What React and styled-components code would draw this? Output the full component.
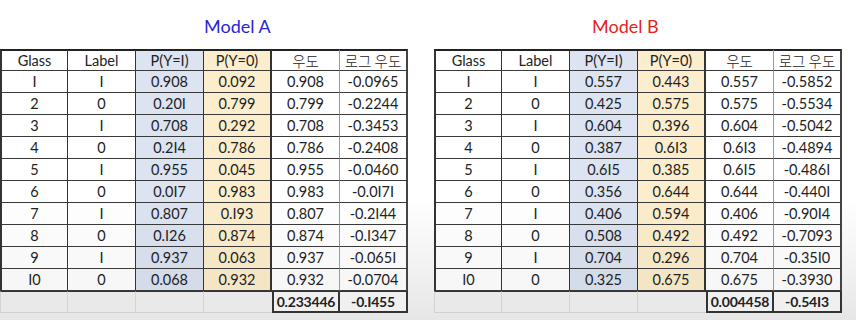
import React from 'react'
import styled, { createGlobalStyle } from 'styled-components';

const GlobalStyle = createGlobalStyle`
    html, body {
        margin: 0;
        padding: 0;
    }
    body {
        width: 856px;
        height: 320px;
        overflow: hidden;
        font-family: "Lato", "Open Sans", sans-serif;
        background: linear-gradient(180deg, #ffffff 0%, #ffffff 62%, #f1f1f1 85%, #e6e6e6 100%);
    }
`;

const models = [
    {
        name: "Model A",
        color: "#2626d4",
        titleOffset: 204,
        rows: [
            ["1", "1", "0.908", "0.092", "0.908", "-0.0965"],
            ["2", "0", "0.201", "0.799", "0.799", "-0.2244"],
            ["3", "1", "0.708", "0.292", "0.708", "-0.3453"],
            ["4", "0", "0.214", "0.786", "0.786", "-0.2408"],
            ["5", "1", "0.955", "0.045", "0.955", "-0.0460"],
            ["6", "0", "0.017", "0.983", "0.983", "-0.0171"],
            ["7", "1", "0.807", "0.193", "0.807", "-0.2144"],
            ["8", "0", "0.126", "0.874", "0.874", "-0.1347"],
            ["9", "1", "0.937", "0.063", "0.937", "-0.0651"],
            ["10", "0", "0.068", "0.932", "0.932", "-0.0704"],
        ],
        total: ["0.233446", "-0.1455"],
    },
    {
        name: "Model B",
        color: "#e5231c",
        titleOffset: 158,
        rows: [
            ["1", "1", "0.557", "0.443", "0.557", "-0.5852"],
            ["2", "0", "0.425", "0.575", "0.575", "-0.5534"],
            ["3", "1", "0.604", "0.396", "0.604", "-0.5042"],
            ["4", "0", "0.387", "0.613", "0.613", "-0.4894"],
            ["5", "1", "0.615", "0.385", "0.615", "-0.4861"],
            ["6", "0", "0.356", "0.644", "0.644", "-0.4401"],
            ["7", "1", "0.406", "0.594", "0.406", "-0.9014"],
            ["8", "0", "0.508", "0.492", "0.492", "-0.7093"],
            ["9", "1", "0.704", "0.296", "0.704", "-0.3510"],
            ["10", "0", "0.325", "0.675", "0.675", "-0.3930"],
        ],
        total: ["0.004458", "-0.5413"],
    },
];

const headers = ["Glass", "Label", "P(Y=1)", "P(Y=0)", "우도", "로그 우도"];
const tones = [null, null, "blue", "yellow", null, null];

// the slide font draws the digit one like a capital I
const fixOne = (s) => s.replace(/1/g, "I");

const App = () => {
    return (
        <>
            <GlobalStyle />
            <StyledPage>
                {models.map((m) => (
                    <StyledPanel key={m.name}>
                        <StyledTitle $color={m.color} $offset={m.titleOffset}>{m.name}</StyledTitle>
                        <StyledGrid>
                            {headers.map((h, c) => (
                                <StyledCell key={h} $tone={tones[c]} $col={c} $head $korean={c >= 4}>{fixOne(h)}</StyledCell>
                            ))}
                            {m.rows.map((r, ri) =>
                                r.map((v, c) => (
                                    <StyledCell key={ri + "-" + c} $tone={tones[c]} $col={c} $fade={ri}>{fixOne(v)}</StyledCell>
                                ))
                            )}
                            <StyledBlank $col={0} />
                            <StyledBlank $col={1} />
                            <StyledBlank $col={2} />
                            <StyledBlank $col={3} />
                            <StyledTotal $col={4}>{fixOne(m.total[0])}</StyledTotal>
                            <StyledTotal $col={5}>{fixOne(m.total[1])}</StyledTotal>
                        </StyledGrid>
                    </StyledPanel>
                ))}
            </StyledPage>
        </>
    )
}

const StyledPage = styled.div`
    display: flex;
    gap: 26px;
    width: 856px;
    height: 320px;
`;

const StyledPanel = styled.div`
    display: flex;
    flex-direction: column;
    width: 408px;
`;

const StyledTitle = styled.div`
    flex-shrink: 0;
    height: 49px;
    box-sizing: border-box;
    padding-top: 12px;
    padding-left: ${(p) => p.$offset}px;
    font-size: 18px;
    line-height: 28px;
    color: ${(p) => p.$color};
`;

const StyledGrid = styled.div`
    flex-shrink: 0;
    display: grid;
    grid-template-columns: repeat(6, 68px);
    grid-auto-rows: 22px;
    font-size: 14.5px;
    color: #222;
`;

const bgFor = (tone, fade) => {
    const k = fade && fade > 5 ? (fade - 5) * 2 : 0;
    if (tone === "blue") return `rgb(${220 - k}, ${227 - k}, ${241 - k})`;
    if (tone === "yellow") return `rgb(${252 - k}, ${238 - k}, ${204 - k})`;
    return `rgb(${255 - k}, ${255 - k}, ${255 - k})`;
};

const rightLine = [
    "1px solid #333",
    "1px solid #333",
    "1px solid #333",
    "2px solid #333",
    "1px solid #9a9a9a",
    "2px solid #444",
];

const StyledCell = styled.div`
    box-sizing: border-box;
    display: flex;
    align-items: center;
    justify-content: center;
    background: ${(p) => bgFor(p.$tone, p.$fade)};
    border-top: ${(p) => (p.$head ? "2px solid #222" : "none")};
    border-bottom: 1px solid #3a3a3a;
    border-left: ${(p) => (p.$col === 0 ? "2px solid #333" : "none")};
    border-right: ${(p) => rightLine[p.$col]};
    font-family: ${(p) => (p.$korean ? '"Noto Sans CJK KR", "Lato", sans-serif' : '"Lato", "Open Sans", sans-serif')};
    ${(p) => p.$korean && "font-weight: 300;"}
`;

const StyledBlank = styled.div`
    box-sizing: border-box;
    background: #e9e9e9;
    border-top: 1px solid #333;
    border-bottom: 1px solid #d0d0d0;
    border-left: ${(p) => (p.$col === 0 ? "1px solid #d4d4d4" : "none")};
    border-right: ${(p) => (p.$col === 3 ? "none" : "1px solid #d4d4d4")};
`;

const StyledTotal = styled.div`
    box-sizing: border-box;
    display: flex;
    align-items: center;
    justify-content: center;
    font-size: 14px;
    font-weight: 700;
    letter-spacing: -0.2px;
    background: #f0f0f0;
    border-top: 1px solid #333;
    border-bottom: 2px solid #333;
    border-left: ${(p) => (p.$col === 4 ? "2px solid #333" : "none")};
    border-right: 2px solid #333;
`;

export default App
